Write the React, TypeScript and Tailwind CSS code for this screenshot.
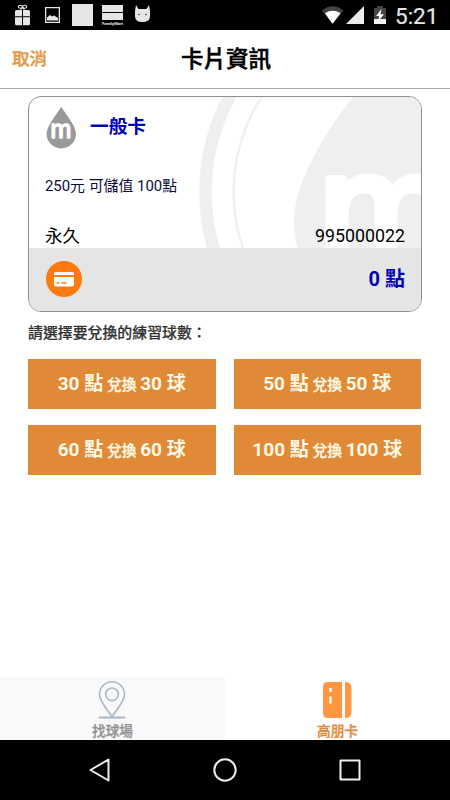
import React from "react";

interface ExchangeOption {
  points: number;
  balls: number;
}

const options: ExchangeOption[] = [
  { points: 30, balls: 30 },
  { points: 50, balls: 50 },
  { points: 60, balls: 60 },
  { points: 100, balls: 100 },
];

const StatusBar: React.FC = () => (
  <div className="flex h-[30px] items-center justify-between bg-black">
    <svg width="160" height="30" viewBox="0 0 160 30" fill="#e6e6e6">
      {/* Gift */}
      <g fill="none" stroke="#e6e6e6" strokeWidth="1.1">
        <ellipse cx="20.300" cy="6.700" rx="2" ry="1.500" />
        <ellipse cx="24.700" cy="6.700" rx="2" ry="1.500" />
        <path d="M22.500 7.500l-2 2M22.500 7.500l2 2" />
      </g>
      <path d="M16.500 10H22v6.300h-7v-4.800q0-1.500 1.500-1.500zM23 10h5.500q1.500 0 1.500 1.500v4.800h-7zM15 17.300h7v8h-5.500q-1.500 0-1.500-1.500zM23 17.300h7v6.500q0 1.500-1.500 1.500H23z" />
      {/* Picture */}
      <path fillRule="evenodd" d="M45 7h15v16H45zM46.300 8.300v13.400h12.400V8.300z" />
      <path d="M47 20.500v-3l3-2.500 2 1.500 2-1 4 2.500v2.500z" />
      <path d="M72 4h21v22H72z" />
      {/* Store */}
      <path d="M102 5h21v7h-21zM102 13h21v7h-21z" />
      <text x="102" y="25" fontSize="4.200" fontWeight="700" textLength="21" fontFamily="Roboto, sans-serif">
        FamilyMart
      </text>
      {/* Android head */}
      <path d="M136 5l2.500 4h8L149 5l1 6v5q0 6-7.500 6T135 16v-5z" />
      <circle cx="139" cy="14.500" r=".8" fill="#333" />
      <circle cx="146" cy="14.500" r=".8" fill="#333" />
    </svg>
    <div className="flex items-center">
      <svg width="70" height="30" viewBox="320 0 70 30">
        <path d="M322 10.500Q332.500 2 343.500 10.500L332.500 24z" fill="#444" />
        <path d="M325 13.200Q332.500 8.500 340.500 13.200L332.500 23.700z" fill="#fff" />
        <path d="M364 6v18h-18z" fill="#ececec" />
        <path d="M374 8h3V6h6v2h3v11h-12z" fill="#444" />
        <path d="M374 19h12v5h-12z" fill="#f2f2f2" />
        <path d="M381.500 9l-5.500 7h3.200l-1.200 5.500 6-7.300h-3.500z" fill="#fff" />
      </svg>
      <span className="w-[60px] pt-[2px] pl-[5px] text-[22.500px] leading-[30px] text-[#e6e6e6] [-webkit-text-stroke:0.2px]">
        5:21
      </span>
    </div>
  </div>
);

const DropLogo: React.FC = () => (
  <svg width="30" height="43" viewBox="46 106 30 43">
    <path d="M61.300 106.700C65 113 76 126 76 133.700a14.700 14.700 0 0 1-29.400 0C46.600 126 57.600 113 61.300 106.700z" fill="#999" />
    <text
      x="50.600"
      y="138"
      fontSize="25"
      fontFamily="Liberation Sans, sans-serif"
      fill="#fff"
      stroke="#fff"
      strokeWidth="1.500"
      strokeLinejoin="round"
    >
      m
    </text>
  </svg>
);

const CardArtwork: React.FC = () => (
  <svg className="absolute inset-0" width="392" height="151" viewBox="29 97 392 151">
    <circle cx="407" cy="192" r="201.500" fill="none" stroke="#efefef" strokeWidth="12.500" />
    <circle cx="407" cy="192" r="173.500" fill="none" stroke="#efefef" strokeWidth="2.300" />
    <path d="M389 47C365 85 294 160 294 222a95 95 0 0 0 190 0C484 160 413 85 389 47z" fill="#efefef" />
    <text
      x="319"
      y="264"
      fontSize="160"
      fontFamily="Liberation Sans, sans-serif"
      fill="#fff"
      stroke="#fff"
      strokeWidth="9"
      strokeLinejoin="round"
    >
      m
    </text>
  </svg>
);

const MemberCard: React.FC = () => (
  <section className="mx-7 mt-[7px] h-[216px] overflow-hidden rounded-[13px] border border-[#8b9199] bg-white">
    <div className="relative h-[151px]">
      <CardArtwork />
      <div className="relative flex h-full flex-col pr-4 pl-4">
        <div className="flex pt-[9px] pl-[1px]">
          <DropLogo />
          <h2 className="pt-[7px] pl-[14px] text-[18.700px] leading-[28px] font-bold text-[#0000b8]">一般卡</h2>
        </div>
        <p className="mt-[26px] text-[14.900px] leading-[22px] text-[#0b0b40]">250元 可儲值 100點</p>
        <div className="mt-[26px] flex justify-between text-[17.500px] leading-[26px] text-black">
          <span>永久</span>
          <span className="text-[17.800px]">995000022</span>
        </div>
      </div>
    </div>
    <div className="flex h-[63px] items-center justify-between bg-[#e5e5e5] pr-4 pb-[2px] pl-[17px]">
      <svg width="36" height="36" viewBox="0 0 36 36">
        <circle cx="18" cy="18" r="18" fill="#ff7a0d" />
        <path d="M10 11h16q2 0 2 2v1H8v-1q0-2 2-2zM8 16h20v7.500q0 2-2 2H10q-2 0-2-2z" fill="#fff" />
        <path d="M10.500 22h3M15.500 22h5" stroke="#ff7a0d" strokeWidth="1.300" />
      </svg>
      <span className="pt-[1px] text-[20px] font-bold text-[#0000b8]">0 點</span>
    </div>
  </section>
);

const ExchangeButton: React.FC<{ option: ExchangeOption }> = ({ option }) => (
  <button className="flex h-[50px] items-center justify-center bg-[#e08a38] pt-[1px] text-[#fff8e3]">
    <span className="text-[19px] font-bold whitespace-pre">
      {option.points} 點
      <span className="text-[14.800px] font-medium [-webkit-text-stroke:0.3px]"> 兌換 </span>
      {option.balls} 球
    </span>
  </button>
);

const TabBar: React.FC = () => (
  <nav className="grid h-[63px] grid-cols-2 text-[13.700px] leading-[20px] font-medium [-webkit-text-stroke:0.3px]">
    <div className="flex flex-col items-center bg-[#f9f9f9] pt-[4px] text-[#939393]">
      <svg className="mr-[1px]" width="28" height="38" viewBox="0 0 28 38" fill="none" stroke="#a9b7c8" strokeWidth="1.600">
        <path d="M14 36C10 29 1.500 21 1.500 13.300a12.500 12.500 0 0 1 25 0C26.500 21 18 29 14 36z" />
        <circle cx="14" cy="13.300" r="6.300" />
        <path d="M.7 36.500h26.600" strokeWidth="2" />
      </svg>
      <span className="mt-[2px]">找球場</span>
    </div>
    <div className="flex flex-col items-center pt-[4px] text-[#e08a3c]">
      <svg width="29" height="38" viewBox="0 0 29 38">
        <path d="M5 1h14v36H5q-5 0-5-5V6q0-5 5-5zM22 1q6.500 0 6.500 6v24q0 6-6.500 6z" fill="#ff9742" />
        <path d="M7.500 7v4M7.500 15.500v7" stroke="#fff" strokeWidth="2.200" />
      </svg>
      <span className="mt-[2px]">高朋卡</span>
    </div>
  </nav>
);

const NavigationBar: React.FC = () => (
  <div className="flex h-[60px] items-center justify-center gap-[101px] bg-black">
    <svg width="24" height="24" viewBox="0 0 24 24" fill="none" stroke="#eee" strokeWidth="2" strokeLinejoin="round">
      <path d="M20.500 1.500v21L2.500 12z" />
    </svg>
    <svg width="24" height="24" viewBox="0 0 24 24" fill="none" stroke="#eee" strokeWidth="2">
      <circle cx="12" cy="12" r="10.700" />
    </svg>
    <svg width="24" height="24" viewBox="0 0 24 24" fill="none" stroke="#eee" strokeWidth="2" strokeLinejoin="round">
      <path d="M2.500 2.500h19v19h-19z" />
    </svg>
  </div>
);

const App: React.FC = () => {
  return (
    <div className="flex h-[800px] w-[450px] flex-col overflow-hidden bg-white font-['Roboto','Noto_Sans_CJK_TC',sans-serif]">
      <StatusBar />
      <header className="grid h-[59px] grid-cols-[1fr_auto_1fr] items-center border-b border-[#aaa]">
        <button className="pl-3 text-left text-[17.500px] font-medium text-[#e39a4c] [-webkit-text-stroke:0.4px]">取消</button>
        <h1 className="pt-[2px] pl-[2px] text-[22.500px] font-medium text-black [-webkit-text-stroke:0.5px]">卡片資訊</h1>
      </header>

      <main className="flex-1">
        <MemberCard />
        <p className="mt-[10px] ml-7 text-[14.900px] leading-[22px] font-medium text-[#333] [-webkit-text-stroke:0.2px]">
          請選擇要兌換的練習球數：
        </p>
        <div className="mt-[15px] ml-7 grid w-[393px] grid-cols-2 gap-x-[18px] gap-y-4">
          {options.map((option) => (
            <ExchangeButton key={option.points} option={option} />
          ))}
        </div>
      </main>

      <TabBar />
      <NavigationBar />
    </div>
  );
};

export default App;
